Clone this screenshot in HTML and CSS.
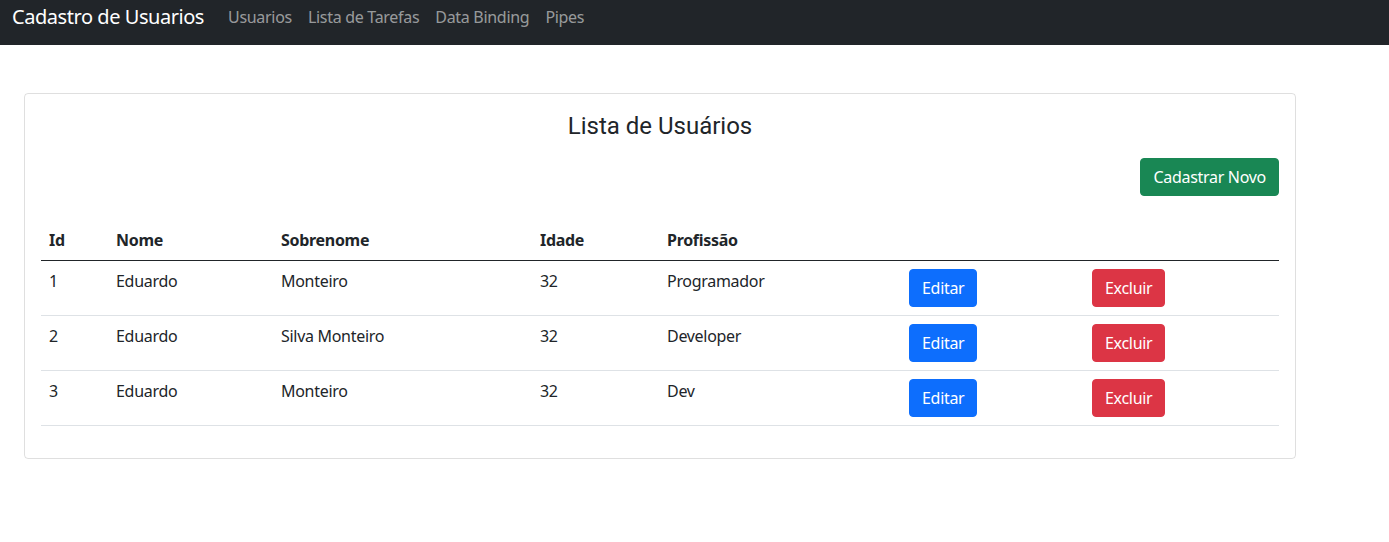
FILE: index.html
```html
<!DOCTYPE html>
<html lang="pt-BR">
<head>
<meta charset="utf-8">
<title>Cadastro de Usuarios</title>
<link rel="stylesheet" href="styles.css">
</head>
<body>
<nav class="navbar">
  <a class="brand" href="#">Cadastro de Usuarios</a>
  <ul class="nav-links">
    <li><a href="#">Usuarios</a></li>
    <li><a href="#">Lista de Tarefas</a></li>
    <li><a href="#">Data Binding</a></li>
    <li><a href="#">Pipes</a></li>
  </ul>
</nav>
<main class="page">
  <section class="card">
    <h4 class="card-title">Lista de Usuários</h4>
    <div class="actions">
      <button class="btn btn-success">Cadastrar Novo</button>
    </div>
    <table class="table">
      <colgroup>
        <col class="c-id"><col class="c-nome"><col class="c-sobre"><col class="c-idade"><col class="c-prof"><col class="c-edit"><col class="c-del">
      </colgroup>
      <thead>
        <tr><th>Id</th><th>Nome</th><th>Sobrenome</th><th>Idade</th><th>Profissão</th><th></th><th></th></tr>
      </thead>
      <tbody>
        <tr><td>1</td><td>Eduardo</td><td>Monteiro</td><td>32</td><td>Programador</td><td><button class="btn btn-primary">Editar</button></td><td><button class="btn btn-danger">Excluir</button></td></tr>
        <tr><td>2</td><td>Eduardo</td><td>Silva Monteiro</td><td>32</td><td>Developer</td><td><button class="btn btn-primary">Editar</button></td><td><button class="btn btn-danger">Excluir</button></td></tr>
        <tr><td>3</td><td>Eduardo</td><td>Monteiro</td><td>32</td><td>Dev</td><td><button class="btn btn-primary">Editar</button></td><td><button class="btn btn-danger">Excluir</button></td></tr>
      </tbody>
    </table>
  </section>
</main>
</body>
</html>
```
FILE: styles.css
```css
* { box-sizing: border-box; }
html, body { margin: 0; padding: 0; }
body {
  font-family: "Noto Sans", "Open Sans", sans-serif;
  font-size: 16px;
  line-height: 1.5;
  letter-spacing: -0.3px;
  color: #212529;
  background: #fff;
}
.navbar {
  background: #212529;
  height: 45px;
  display: flex;
  align-items: flex-start;
  padding: 0 12px;
}
.brand {
  color: #fff;
  text-decoration: none;
  font-size: 20px;
  line-height: 30px;
  letter-spacing: -0.45px;
  padding-top: 2px;
  margin-right: 16px;
}
.nav-links {
  list-style: none;
  margin: 0;
  padding: 0;
  display: flex;
}
.nav-links a {
  display: block;
  color: rgba(255,255,255,0.55);
  text-decoration: none;
  padding: 5px 8px;
  line-height: 24px;
}
.page {
  padding: 48px 93px 0 24px;
}
.card {
  border: 1px solid rgba(0,0,0,0.125);
  border-radius: 4px;
  padding: 16px;
  width: 1272px;
}
.card-title {
  margin: 0;
  text-align: center;
  font-family: Roboto, sans-serif;
  font-weight: 400;
  font-size: 24px;
  line-height: 32px;
  letter-spacing: 0;
}
.actions {
  display: flex;
  justify-content: flex-end;
  margin-top: 16px;
  margin-bottom: 24px;
}
.btn {
  font-family: inherit;
  font-size: 16px;
  line-height: 24px;
  letter-spacing: inherit;
  padding: 6px 12px;
  border: 1px solid transparent;
  border-radius: 4px;
  color: #fff;
  cursor: pointer;
}
.btn-success { background: #198754; border-color: #198754; }
.btn-primary { background: #0d6efd; border-color: #0d6efd; }
.btn-danger { background: #dc3545; border-color: #dc3545; }
.table {
  width: 100%;
  border-collapse: collapse;
  table-layout: fixed;
  margin-bottom: 16px;
}
.c-id { width: 67px; }
.c-nome { width: 165px; }
.c-sobre { width: 259px; }
.c-idade { width: 127px; }
.c-prof { width: 242px; }
.c-edit { width: 183px; }
.c-del { width: 195px; }
.table th, .table td {
  padding: 8px;
  text-align: left;
  vertical-align: top;
}
.table th { font-weight: 700; }
.table thead tr { border-bottom: 1px solid #212529; }
.table tbody tr { border-bottom: 1px solid #dee2e6; }
```
